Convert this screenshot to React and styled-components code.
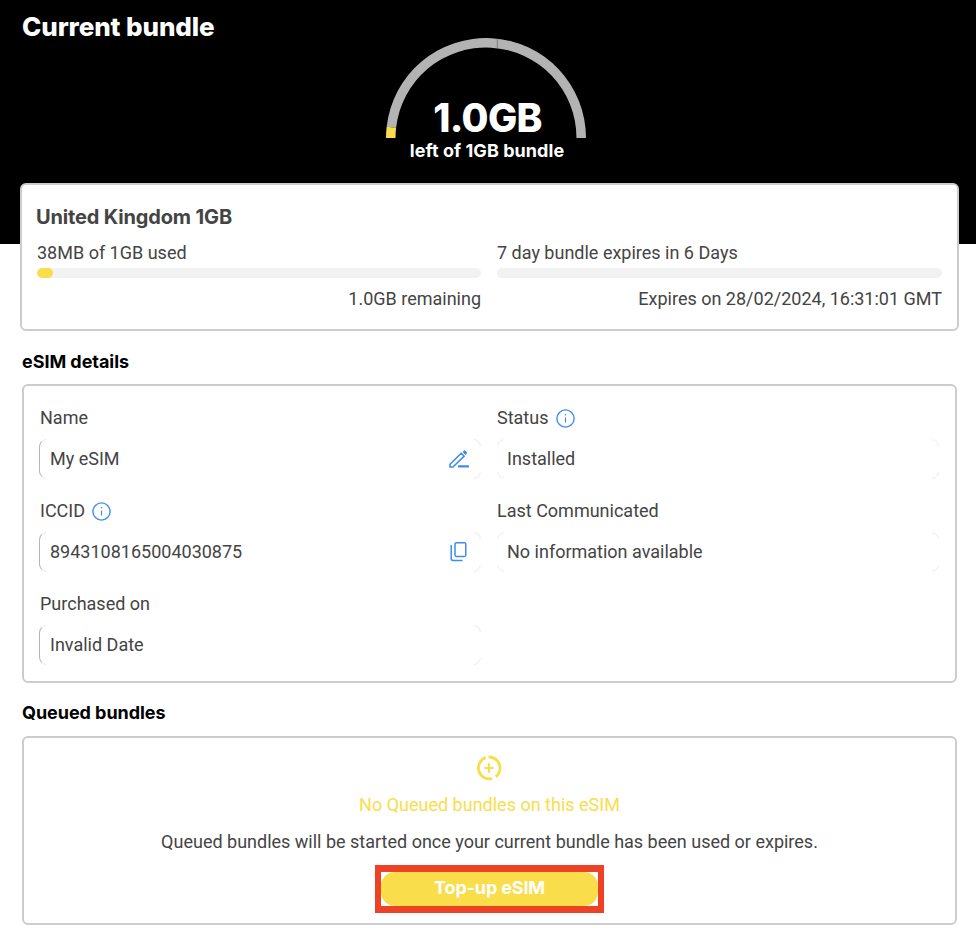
import React from "react";
import styled, { createGlobalStyle } from "styled-components";

const Global = createGlobalStyle`
  html, body { margin: 0; padding: 0; background: #fff; }
  * { box-sizing: border-box; }
  body { font-family: Roboto, "Liberation Sans", sans-serif; color: #444; }
`;
const display = `Inter, "Liberation Sans", sans-serif`;

const Hero = styled.header`
  height: 244px; background: #000; padding: 12px 22px 0; position: relative;
  display: flex; flex-direction: column;
`;
const Title = styled.h1`
  margin: 0; font: 800 26px/30px ${display}; color: #fff; letter-spacing: -0.1px;
`;
const Gauge = styled.div`
  width: 200px; height: 100px; margin: -4px 0 0 364px; position: relative;
  display: flex; flex-direction: column; align-items: center;
`;
const GaugeArc = styled.svg`
  position: absolute; left: 0; top: 0;
`;
const GaugeValue = styled.div`
  margin: 58px 0 0 3px; font: 800 39px/44px ${display}; color: #fff; letter-spacing: -0.7px; position: relative;
`;
const GaugeCaption = styled.div`
  font: 700 18px/20px ${display}; color: #fff; letter-spacing: 0.05px; position: relative; margin: 1px 0 0 2px; white-space: nowrap;
`;
const Main = styled.main`
  padding: 0 19px 21px 22px; margin-top: -61px; position: relative;
`;
const Card = styled.section`
  background: #fff; border: 2px solid #ccc; border-radius: 6px;
`;
const BundleCard = styled(Card)`
  margin: 0 -2px; height: 148px; padding: 19px 15px 0;
`;
const BundleName = styled.h2`
  margin: 0 0 11px -1px; font: 700 20px/26px ${display}; color: #444; letter-spacing: -0.15px;
`;
const TwoCols = styled.div`
  display: grid; grid-template-columns: 444px 445px; column-gap: 16px;
`;
const Usage = styled.div`
  display: flex; flex-direction: column;
`;
const UsageTop = styled.div`
  font-size: 18px; line-height: 24px;
`;
const Track = styled.div`
  height: 10px; margin-top: 3px; background: #f2f2f2; border-radius: 5px; overflow: hidden;
`;
const Fill = styled.div`
  height: 100%; background: #f9dd4a; border-radius: 5px;
`;
const UsageBottom = styled.div`
  font-size: 18px; line-height: 24px; text-align: right; margin-top: 9px;
`;
const SectionHeading = styled.h3`
  margin: ${p => p.$top}px 0 ${p => p.$bottom}px; font: 700 18px/24px ${display}; color: #000; letter-spacing: -0.05px;
`;
const DetailsCard = styled(Card)`
  padding: 20px 16px 16px 15px;
`;
const DetailGrid = styled.div`
  display: grid; grid-template-columns: 442px 442px; column-gap: 16px; row-gap: 20px;
`;
const Label = styled.div`
  display: flex; align-items: center; gap: 8px; height: 24px; margin-bottom: 9px; font-size: 18px; line-height: 24px; color: #444;
`;
const Detail = styled.div`
  &:nth-child(odd) ${Label} { padding-left: 1px; gap: 7px; }
`;
const Field = styled.div`
  position: relative; height: 40px; display: flex; align-items: center; justify-content: space-between;
  padding: 0 10px 2px ${p => (p.$edge ? 10 : 9)}px; font-size: 18px; color: #444;
  border: 1px solid #ececec; border-radius: 8px;
  border-left-color: ${p => (p.$edge ? "#b5b5b5" : "#ececec")};
  &::before {
    content: ""; position: absolute; left: 6px; right: 6px; top: -1px; bottom: -1px;
    border-top: 1px solid #fff; border-bottom: 1px solid #fff;
  }
  &::after {
    content: ""; position: absolute; top: 6px; bottom: 6px; right: -1px; left: ${p => (p.$edge ? "auto" : "-1px")};
    border-right: 1px solid #fff; border-left: ${p => (p.$edge ? "0" : "1px solid #fff")};
  }
`;
const FieldIcon = styled.svg`
  display: block; position: relative; z-index: 1; margin-bottom: -2px;
`;
const QueueCard = styled(Card)`
  height: 189px; padding-top: 17px; display: flex; flex-direction: column; align-items: center;
`;
const EmptyIcon = styled.svg`
  display: block; margin-left: -2px;
`;
const EmptyTitle = styled.div`
  margin-top: 12px; font-size: 18px; line-height: 24px; color: #f9dd4a;
`;
const EmptyBody = styled.p`
  margin: 13px 0 0; font-size: 18px; line-height: 24px; color: #444;
`;
const Highlight = styled.div`
  margin-top: 11px; border: solid #ee4227; border-width: 7px 6px; background: #fff; display: flex; width: 229px; height: 48px;
`;
const TopUp = styled.button`
  flex: 1; border: 0; padding: 0 0 2px; border-radius: 14px; background: #f9dd4a; color: #fff;
  font: 700 18px/32px ${display}; letter-spacing: -0.15px;
`;

const InfoIcon = () => (
  <svg width="19" height="19" viewBox="0 0 19 19" fill="none" stroke="#3f8cf0">
    <circle cx="9.5" cy="9.5" r="8.6" strokeWidth="1.4" />
    <path d="M9.5 8.5v5" strokeWidth="1.2" />
    <circle cx="9.5" cy="5.8" r=".8" fill="#3f8cf0" stroke="none" />
  </svg>
);

const PencilIcon = () => (
  <FieldIcon width="22" height="22" viewBox="0 0 22 22" fill="none">
    <path d="M2 19v-2.8L13.2 5.2l3 3L5 19Z" stroke="#3f8cf0" strokeWidth="1.6" strokeLinejoin="round" />
    <path d="M14.6 4l1.2-1.2a1.2 1.2 0 0 1 1.7 0l1.2 1.2a1.2 1.2 0 0 1 0 1.7L17.5 6.9Z" fill="#3f8cf0" />
    <rect x="10" y="17.2" width="11" height="2.4" rx=".5" fill="#3f8cf0" />
  </FieldIcon>
);

const CopyIcon = () => (
  <FieldIcon width="22" height="22" viewBox="0 0 22 22" fill="none" stroke="#3f8cf0" strokeWidth="1.5">
    <rect x="7" y="1.7" width="10.8" height="13.8" rx="1.4" />
    <path d="M3.2 4.5v13a1.9 1.9 0 0 0 1.9 1.9H14" strokeLinecap="round" />
  </FieldIcon>
);

const PlusCircle = () => (
  <EmptyIcon width="26" height="26" viewBox="0 0 26 26" fill="none" stroke="#f9dd4a" strokeWidth="2.8">
    <path d="M9.6 2.6A11 11 0 0 0 16 23.6" />
    <path d="M12.5 2A11 11 0 0 1 24 13.5A11 11 0 0 1 19.8 21.8" />
    <path d="M13 8.2v9.6M8.2 13h9.6" strokeWidth="2" />
  </EmptyIcon>
);

const polar = (deg, r) => {
  const a = (deg * Math.PI) / 180;
  return [100 - r * Math.cos(a), 100 - r * Math.sin(a)];
};
const band = (from, to, fill) => {
  const [ax, ay] = polar(from, 100);
  const [bx, by] = polar(to, 100);
  const [cx, cy] = polar(to, 90.5);
  const [dx, dy] = polar(from, 90.5);
  return <path d={`M${ax} ${ay}A100 100 0 0 1 ${bx} ${by}L${cx} ${cy}A90.5 90.5 0 0 0 ${dx} ${dy}Z`} fill={fill} />;
};

export default function App() {
  return (
    <>
      <Global />
      <Hero>
        <Title>Current bundle</Title>
        <Gauge>
          <GaugeArc width="200" height="100" viewBox="0 0 200 100">
            {band(6.5, 180, "#b3b3b3")}
            {band(0, 6.5, "#f9dd4a")}
            <path d="M111.3 0.6V10" stroke="#6b6b6b" strokeWidth=".7" />
          </GaugeArc>
          <GaugeValue>1.0GB</GaugeValue>
          <GaugeCaption>left of 1GB bundle</GaugeCaption>
        </Gauge>
      </Hero>
      <Main>
        <BundleCard>
          <BundleName>United Kingdom 1GB</BundleName>
          <TwoCols>
            <Usage>
              <UsageTop>38MB of 1GB used</UsageTop>
              <Track><Fill style={{ width: `${(38 / 1024) * 100}%` }} /></Track>
              <UsageBottom>1.0GB remaining</UsageBottom>
            </Usage>
            <Usage>
              <UsageTop>7 day bundle expires in 6 Days</UsageTop>
              <Track />
              <UsageBottom>Expires on 28/02/2024, 16:31:01 GMT</UsageBottom>
            </Usage>
          </TwoCols>
        </BundleCard>
        <SectionHeading $top={19} $bottom={10}>eSIM details</SectionHeading>
        <DetailsCard>
          <DetailGrid>
            <Detail>
              <Label>Name</Label>
              <Field $edge>My eSIM<PencilIcon /></Field>
            </Detail>
            <Detail>
              <Label>Status <InfoIcon /></Label>
              <Field>Installed</Field>
            </Detail>
            <Detail>
              <Label>ICCID <InfoIcon /></Label>
              <Field $edge>8943108165004030875<CopyIcon /></Field>
            </Detail>
            <Detail>
              <Label>Last Communicated</Label>
              <Field>No information available</Field>
            </Detail>
            <Detail>
              <Label>Purchased on</Label>
              <Field $edge>Invalid Date</Field>
            </Detail>
          </DetailGrid>
        </DetailsCard>
        <SectionHeading $top={18} $bottom={11}>Queued bundles</SectionHeading>
        <QueueCard>
          <PlusCircle />
          <EmptyTitle>No Queued bundles on this eSIM</EmptyTitle>
          <EmptyBody>Queued bundles will be started once your current bundle has been used or expires.</EmptyBody>
          <Highlight><TopUp>Top-up eSIM</TopUp></Highlight>
        </QueueCard>
      </Main>
    </>
  );
}
